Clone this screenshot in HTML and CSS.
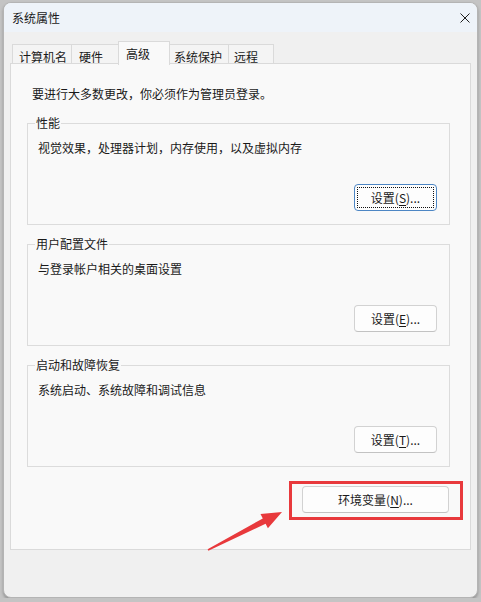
FILE: index.html
```html
<!DOCTYPE html>
<html lang="zh-CN">
<head>
  <meta charset="UTF-8" />
  <meta name="viewport" content="width=device-width, initial-scale=1.0" />
  <title>系统属性</title>
  <link rel="stylesheet" href="styles.css">
</head>
<body>
  <div class="window">
    <div class="titlebar">
      <span class="title">系统属性</span>
      <svg class="close" width="10" height="10" viewBox="0 0 10 10">
        <path d="M0.5 0.5 L9.5 9.5 M9.5 0.5 L0.5 9.5" stroke="#1f1f1f" stroke-width="1" fill="none" />
      </svg>
    </div>

    <div class="tabs">
      <div class="tab tab-name">计算机名</div>
      <div class="tab tab-hw">硬件</div>
      <div class="tab tab-adv active">高级</div>
      <div class="tab tab-prot">系统保护</div>
      <div class="tab tab-remote">远程</div>
    </div>

    <div class="panel">
      <p class="intro">要进行大多数更改，你必须作为管理员登录。</p>

      <div class="group">
        <span class="group-title">性能</span>
        <p class="desc">视觉效果，处理器计划，内存使用，以及虚拟内存</p>
        <div class="row"><button class="btn focused">设置(<u>S</u>)...</button></div>
      </div>

      <div class="group">
        <span class="group-title">用户配置文件</span>
        <p class="desc">与登录帐户相关的桌面设置</p>
        <div class="row"><button class="btn">设置(<u>E</u>)...</button></div>
      </div>

      <div class="group">
        <span class="group-title">启动和故障恢复</span>
        <p class="desc">系统启动、系统故障和调试信息</p>
        <div class="row"><button class="btn">设置(<u>T</u>)...</button></div>
      </div>

      <div class="row env-row">
        <div class="mark">
          <button class="btn btn-env">环境变量(<u>N</u>)...</button>
          <div class="mark-box"></div>
          <svg class="mark-arrow" width="90" height="52" viewBox="0 0 90 52">
            <polygon points="80,6 58.5,8 60.8,12.4 5.6,43.3 6.4,44.7 63.6,17.8 65.9,22.2" fill="#e8393c" />
          </svg>
        </div>
      </div>
    </div>
  </div>
</body>
</html>
```

FILE: styles.css
```css
body {
  margin: 0;
  background: #c4c4c4;
  font-family: "Noto Sans CJK SC", "Noto Sans", sans-serif;
  font-size: 12px;
  color: #1a1a1a;
}
.window {
  box-sizing: border-box;
  margin: 2px 3px 0;
  width: 475px;
  height: 596px;
  background: #f0f0f0;
  border: 1px solid #b4b4b4;
  border-radius: 8px;
  box-shadow: 0 2px 3px rgba(0, 0, 0, 0.25);
  overflow: hidden;
}
.titlebar {
  height: 29px;
  background: #eef3f9;
  display: flex;
  align-items: center;
  justify-content: space-between;
  padding: 0 7px 0 8px;
}
.title {
  line-height: 16px;
}

/* tab strip */
.tabs {
  display: flex;
  align-items: flex-end;
  height: 22px;
  margin: 9px 0 0 8px;
  position: relative;
  z-index: 1;
}
.tab {
  box-sizing: border-box;
  height: 19px;
  line-height: 16px;
  padding: 4px 0 0 6px;
  background: #f4f4f4;
  border: 1px solid #dadada;
  border-bottom: none;
  margin-left: -1px;
}
.tab-name { width: 60px; margin-left: 0; }
.tab-hw { width: 48px; padding-left: 7px; }
.tab-adv { width: 52px; padding-left: 7px; }
.tab-prot { width: 60px; padding-left: 4px; }
.tab-remote { width: 46px; padding-left: 5px; }
.tab.active {
  height: 24px;
  margin-bottom: -2px;
  padding-top: 4px;
  background: #f9f9f9;
  position: relative;
}

/* page body */
.panel {
  box-sizing: border-box;
  margin-left: 6px;
  width: 461px;
  height: 487px;
  background: #f9f9f9;
  border: 1px solid #dadada;
  padding: 21px 0 0 16px;
}
.intro {
  margin: 0 0 20px 5px;
  line-height: 18px;
}
.group {
  box-sizing: border-box;
  width: 423px;
  height: 102px;
  border: 1px solid #dcdcdc;
  margin-bottom: 19px;
  padding: 0 12px 0 10px;
}
.group-title {
  display: block;
  width: fit-content;
  margin: -9px 0 0 -3px;
  padding: 0 1px;
  line-height: 16px;
  background: #f9f9f9;
}
.desc {
  margin: 8px 0 0 0;
  line-height: 18px;
}
.row {
  display: flex;
  justify-content: flex-end;
}
.group .row {
  margin-top: 27px;
}
.btn {
  box-sizing: border-box;
  width: 83px;
  height: 27px;
  padding: 0;
  font-family: inherit;
  font-size: 12px;
  color: #1a1a1a;
  background: #fdfdfd;
  border: 1px solid #d2d2d2;
  border-bottom-color: #c2c2c2;
  border-radius: 4px;
  position: relative;
}
.btn u {
  text-decoration-thickness: 1px;
  text-underline-offset: 2px;
}
.btn.focused {
  border-color: #4d86c4;
}
.btn.focused::after {
  content: "";
  position: absolute;
  inset: 2px;
  border: 1px dotted #111;
  border-radius: 1px;
}
.env-row {
  width: 422px;
  margin-top: 0;
}
.btn-env {
  width: 147px;
}

/* red annotation round the environment button */
.mark {
  position: relative;
}
.mark-box {
  position: absolute;
  left: -13px;
  right: -14px;
  top: -5px;
  bottom: -7px;
  border: 3px solid #e8393c;
}
.mark-arrow {
  position: absolute;
  left: -100px;
  top: 20px;
}
```
